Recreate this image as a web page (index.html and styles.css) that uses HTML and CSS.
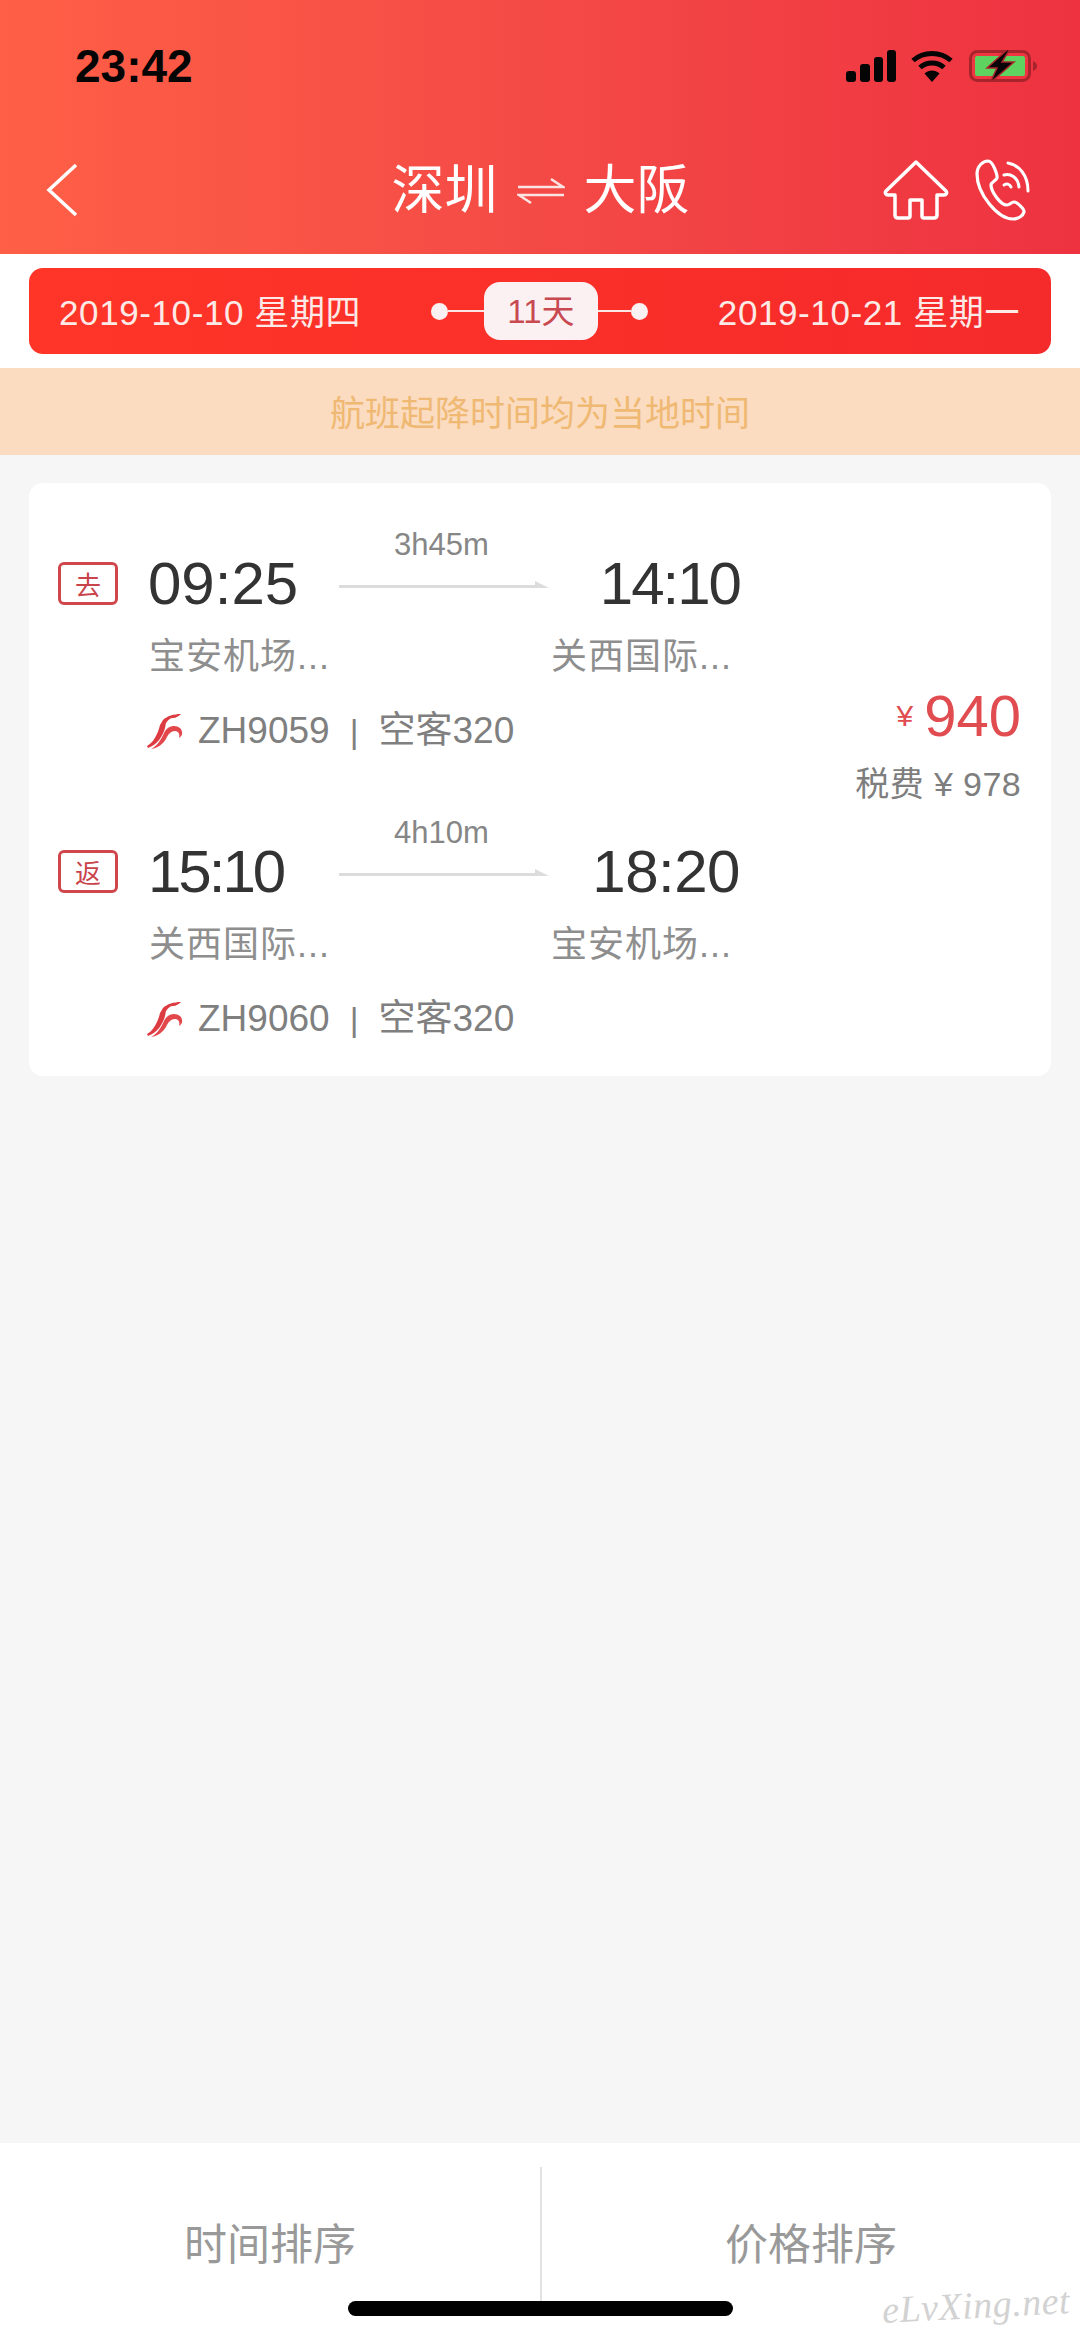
FILE: index.html
```html
<!DOCTYPE html>
<html lang="zh">
<head>
<meta charset="utf-8">
<title>深圳 大阪</title>
<link rel="stylesheet" href="styles.css">
</head>
<body>
<div class="page">
  <header class="header">
    <div class="status">
      <span class="clock">23:42</span>
      <div class="status-icons">
        <svg width="50" height="32" viewBox="0 0 50 32"><g fill="#050505"><rect x="0" y="21" width="10" height="11" rx="3"/><rect x="14" y="14" width="10" height="18" rx="3"/><rect x="28" y="7" width="9" height="25" rx="3"/><rect x="41" y="0" width="9" height="32" rx="3"/></g></svg>
        <svg class="wifi" width="42" height="32" viewBox="0 0 42 32"><g fill="none" stroke="#050505" stroke-width="5"><path d="M2 10.500C12.500 1 29.500 1 40 10.500"/><path d="M9 17.500C15.500 11.500 26.500 11.500 33 17.500"/></g><path d="M13.500 23.500C18 19.500 24 19.500 28.500 23.500L21 32Z" fill="#050505"/></svg>
        <svg class="battery" width="70" height="32" viewBox="0 0 70 32"><rect x="1.500" y="1.500" width="59" height="29" rx="7" fill="none" stroke="#a8242c" stroke-width="3"/><rect x="6" y="6" width="50" height="20" rx="2" fill="#5fd35f"/><path d="M64 11c3 1 4 3 4 5s-1 4-4 5z" fill="#a8242c"/><path d="M39-1 18 18h10l-7 15 24-21H33l8-13z" fill="#0a0508" stroke="#a8242c" stroke-width="1.500"/></svg>
      </div>
    </div>
    <nav class="nav">
      <div class="nav-side">
        <svg width="32" height="54" viewBox="0 0 32 54"><path d="M30 2 3 27l27 25" fill="none" stroke="#fff" stroke-width="3.500"/></svg>
      </div>
      <h1 class="title">
        <span>深圳</span>
        <svg width="48" height="28" viewBox="0 0 48 28"><g fill="none" stroke="#fbe3e1" stroke-width="2.500"><path d="M1 10h45L34 2"/><path d="M47 18H2l12 8"/></g></svg>
        <span>大阪</span>
      </h1>
      <div class="nav-side nav-right">
        <svg width="66" height="62" viewBox="0 0 66 62"><path d="M33 3 3 32c-1.500 2 0 4 2 4h7v20c0 2 1 3 3 3h10c1.500 0 2-1 2-2V41h12v16c0 1 .5 2 2 2h10c2 0 3-1 3-3V36h7c2 0 3.500-2 2-4Z" fill="none" stroke="#fff" stroke-width="3.500" stroke-linejoin="round"/></svg>
        <svg width="56" height="62" viewBox="0 0 56 62"><g fill="none" stroke="#fff" stroke-linecap="round"><path d="M13 2c-5 0-11 5-11 13 0 20 21 45 36 45 5 0 10-3 11-7 .500-3-7-10-10-10-3 0-4 3-7 3-7 0-16-14-16-20 0-3 5-4 6-7 .500-3-4-17-9-17Z" stroke-width="3.200" stroke-linejoin="round"/><path d="M29 26c2-2 6-1 7 2" stroke-width="3"/><path d="M29 16c6-2 14 2 15 12" stroke-width="3"/><path d="M33 4c11 2 20 12 20 28" stroke-width="3"/></g></svg>
      </div>
    </nav>
  </header>

  <section class="strip">
    <div class="datebar">
      <span class="date">2019-10-10 星期四</span>
      <div class="days">
        <i class="dot"></i><i class="link link-l"></i>
        <span class="pill"><span class="pill-text">11天</span></span>
        <i class="link link-r"></i><i class="dot"></i>
      </div>
      <span class="date date-r">2019-10-21 星期一</span>
    </div>
  </section>

  <div class="notice"><span class="notice-text">航班起降时间均为当地时间</span></div>

  <main class="main">
    <article class="card">
      <div class="legs">
        <div class="leg">
          <div class="times">
            <span class="tag">去</span>
            <span class="time dep">09:25</span>
            <div class="mid">
              <span class="dur">3h45m</span>
              <svg class="arrow" width="210" height="12" viewBox="0 0 210 12"><path d="M0 5h196v-4l14 7H0Z" fill="#dcdcdc"/></svg>
            </div>
            <span class="time arr narrow">14:10</span>
          </div>
          <div class="places"><span class="place dep-place">宝安机场...</span><span class="place">关西国际...</span></div>
          <div class="flight">
            <svg class="logo" width="36" height="36" viewBox="0 0 36 36"><path d="M16 7C20 3 27 1 34 1c-2 2-5 4-8 4-3 0-5 2-7 5l-1 5c-2 8-8 17-17 20l-1-2c6-3 11-12 13-21Z" fill="#dd3b42"/><path d="M17 20c3-7 11-9 16-5 3 3 3 8-1 10 1-3 0-7-4-7-4 0-7 3-9 8-3 5-8 9-15 10 6-3 10-9 13-16Z" fill="#e2474c"/></svg>
            <span>ZH9059</span><span class="sep">|</span><span>空客320</span>
          </div>
        </div>
        <div class="leg">
          <div class="times">
            <span class="tag">返</span>
            <span class="time dep narrower">15:10</span>
            <div class="mid">
              <span class="dur">4h10m</span>
              <svg class="arrow" width="210" height="12" viewBox="0 0 210 12"><path d="M0 5h196v-4l14 7H0Z" fill="#dcdcdc"/></svg>
            </div>
            <span class="time arr slim">18:20</span>
          </div>
          <div class="places"><span class="place dep-place">关西国际...</span><span class="place">宝安机场...</span></div>
          <div class="flight">
            <svg class="logo" width="36" height="36" viewBox="0 0 36 36"><path d="M16 7C20 3 27 1 34 1c-2 2-5 4-8 4-3 0-5 2-7 5l-1 5c-2 8-8 17-17 20l-1-2c6-3 11-12 13-21Z" fill="#dd3b42"/><path d="M17 20c3-7 11-9 16-5 3 3 3 8-1 10 1-3 0-7-4-7-4 0-7 3-9 8-3 5-8 9-15 10 6-3 10-9 13-16Z" fill="#e2474c"/></svg>
            <span>ZH9060</span><span class="sep">|</span><span>空客320</span>
          </div>
        </div>
      </div>
      <div class="price">
        <div class="fare"><span class="yen">¥</span><span class="amount">940</span></div>
        <div class="tax">税费 ¥ 978</div>
      </div>
    </article>
  </main>

  <footer class="footer">
    <button class="sort">时间排序</button>
    <button class="sort sort-r">价格排序</button>
    <span class="home-bar"></span>
    <span class="mark">eLvXing.net</span>
  </footer>
</div>
</body>
</html>
```
FILE: styles.css
```css
* { box-sizing: border-box; }
html, body { margin: 0; padding: 0; }
body { font-family: "Liberation Sans", "Noto Sans CJK SC", sans-serif; background: #f6f6f6; }
.page { width: 1080px; height: 2339px; display: flex; flex-direction: column; overflow: hidden; }

.header { height: 254px; background: linear-gradient(90deg, #ff5f46 0%, #f44a46 50%, #ee3240 100%); flex: none; }
.status { height: 132px; padding: 0 41px 0 75px; display: flex; align-items: center; justify-content: space-between; }
.clock { font-size: 46px; font-weight: 700; color: #050505; line-height: 1; }
.status-icons { display: flex; align-items: center; }
.wifi { margin-left: 15px; }
.battery { margin-left: 16px; }
.nav { height: 112px; padding-top: 3px; display: flex; align-items: center; }
.nav-side { flex: 1; display: flex; padding-left: 46px; }
.nav-right { justify-content: flex-end; padding: 0 49px 0 0; gap: 26px; }
.title { margin: 0; padding: 2px 0 0 4px; display: flex; align-items: center; gap: 19px; font-size: 53px; font-weight: 400; line-height: 60px; color: #fff; }

.strip { background: #fff; padding: 14px 29px; flex: none; }
.datebar { height: 86px; border-radius: 14px; background: linear-gradient(90deg, #ff3528, #f52a2b); padding: 0 31px 0 30px; display: grid; grid-template-columns: 1fr auto 1fr; align-items: center; }
.date { font-size: 35px; letter-spacing: .6px; color: #fdeae6; white-space: nowrap; margin-bottom: 4px; }
.date-r { justify-self: end; }
.days { display: flex; align-items: center; }
.dot { width: 17px; height: 17px; border-radius: 50%; background: #fbf1f2; }
.link { height: 2px; background: #fbe6e4; }
.link-l { width: 36px; }
.link-r { width: 33px; }
.pill { width: 114px; height: 58px; border-radius: 16px; background: #fbf1f3; color: #c84a50; font-size: 33px; display: flex; align-items: center; justify-content: center; }
.pill-text { margin-bottom: 4px; }

.notice { height: 87px; flex: none; background: #fbdcc0; color: #efb973; font-size: 35px; display: flex; align-items: center; justify-content: center; }
.notice-text { margin-bottom: 2px; }

.main { flex: 1; padding: 28px 29px 0; }
.card { background: #fff; border-radius: 14px; padding: 44px 30px 32px 29px; display: flex; justify-content: space-between; }
.leg + .leg { margin-top: 59px; }
.times { display: flex; align-items: flex-end; height: 87px; }
.tag { width: 60px; height: 43px; margin: 0 31px 9px 0; border: 3px solid #cf474c; border-radius: 6px; color: #c9434a; font-size: 26px; display: flex; align-items: center; justify-content: center; }
.time { font-size: 60px; line-height: 60px; color: #333; }
.narrow { letter-spacing: -2px; }
.narrower { letter-spacing: -3px; }
.slim { letter-spacing: -.5px; }
.dep { width: 190px; margin-left: -1px; margin-right: 1px; }
.arr { width: 190px; text-align: right; }
.mid { width: 211px; height: 87px; display: flex; flex-direction: column; align-items: flex-start; }
.dur { width: 100%; height: 35px; padding: 1px 6px 0 0; line-height: 34px; font-size: 31px; color: #868686; text-align: center; }
.arrow { margin-top: 18px; }
.places { display: flex; margin: 18px 0 0 91px; height: 50px; line-height: 50px; font-size: 36px; letter-spacing: 1px; color: #8e8e8e; }
.dep-place { width: 402px; }
.flight { display: flex; align-items: baseline; height: 50px; line-height: 50px; margin: 24px 0 0 89px; font-size: 37px; color: #7f7f7f; }
.logo { align-self: center; margin-right: 15px; }
.sep { font-size: 34px; margin: 0 20px; }

.price { align-self: center; margin-bottom: 80px; text-align: right; }
.fare { display: flex; align-items: center; justify-content: flex-end; color: #e04c50; height: 60px; }
.yen { font-size: 30px; margin-right: 11px; }
.amount { font-size: 58px; line-height: 60px; }
.tax { margin-top: 16px; font-size: 34px; letter-spacing: .4px; line-height: 44px; color: #7e7e7e; }

.footer { position: relative; flex: none; height: 196px; background: #fff; display: grid; grid-template-columns: 1fr 1fr; padding: 24px 0 38px; }
.sort { border: 0; background: none; padding: 14px 0 0; font-family: inherit; font-size: 43px; color: #999; }
.sort-r { border-left: 2px solid #e2e2e2; }
.home-bar { position: absolute; left: 348px; top: 158px; width: 385px; height: 15px; border-radius: 8px; background: #000; }
.mark { position: absolute; right: 10px; top: 139px; font-family: "Liberation Serif", serif; font-style: italic; font-size: 38px; letter-spacing: .5px; color: #d2d2d2; line-height: 46px; transform: rotate(-3deg); }
```
